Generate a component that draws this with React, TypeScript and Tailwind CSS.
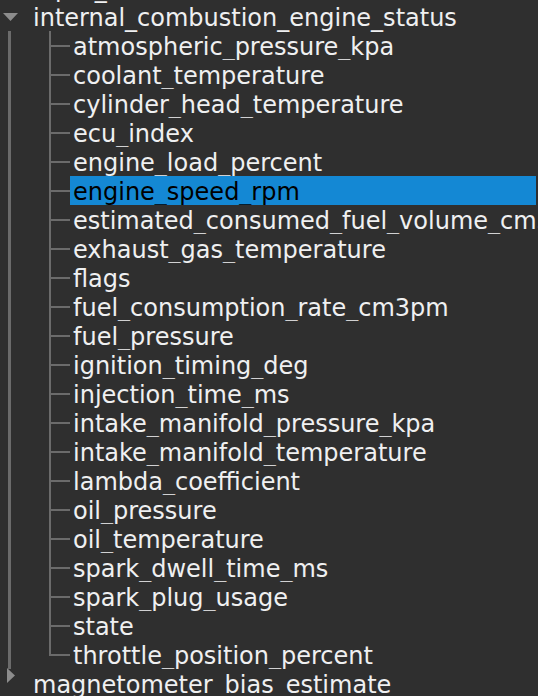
import React from "react";

const children = [
  "atmospheric_pressure_kpa",
  "coolant_temperature",
  "cylinder_head_temperature",
  "ecu_index",
  "engine_load_percent",
  "engine_speed_rpm",
  "estimated_consumed_fuel_volume_cm3",
  "exhaust_gas_temperature",
  "flags",
  "fuel_consumption_rate_cm3pm",
  "fuel_pressure",
  "ignition_timing_deg",
  "injection_time_ms",
  "intake_manifold_pressure_kpa",
  "intake_manifold_temperature",
  "lambda_coefficient",
  "oil_pressure",
  "oil_temperature",
  "spark_dwell_time_ms",
  "spark_plug_usage",
  "state",
  "throttle_position_percent",
];

const font = { fontFamily: '"DejaVu Sans", sans-serif' };

export default function App() {
  return (
    <div
      className="w-[538px] h-[696px] overflow-hidden bg-[#2f2f2f] text-[#eff0f1] text-[24px]"
      style={font}
    >
      <div className="-mt-[27px] flex flex-col">
        {/* previous sibling, cut off */}
        <div className="flex h-[29px]">
          <div className="w-[33px] shrink-0" />
          <div className="whitespace-nowrap leading-[33px]">input_status</div>
        </div>
        {/* expanded parent */}
        <div className="flex h-[29px]">
          <div className="w-[33px] shrink-0 flex items-center justify-start pl-[3px]">
            <svg width="15" height="8" viewBox="0 0 15 8">
              <polygon points="0,0 15,0 7.5,8" fill="#8c8c8c" />
            </svg>
          </div>
          <div className="whitespace-nowrap leading-[33px]">internal_combustion_engine_status</div>
        </div>
        {children.map((c, i) => {
          const last = i === children.length - 1;
          const selected = c === "engine_speed_rpm";
          return (
            <div key={c} className="flex h-[29px]">
              <div className="w-[40px] shrink-0 relative">
                <div className="absolute left-[8px] top-0 bottom-0 w-[3px] bg-[#6b6b6b]" />
              </div>
              <div className="w-[30px] shrink-0 relative">
                <div
                  className={`absolute left-[9px] top-0 w-[2px] bg-[#6b6b6b] ${
                    last ? "h-[16px]" : "bottom-0"
                  }`}
                />
                <div className="absolute left-[9px] right-0 top-[14px] h-[2px] bg-[#6b6b6b]" />
              </div>
              <div
                className={`flex-1 min-w-0 whitespace-nowrap overflow-hidden pl-[3px] leading-[33px] ${
                  selected ? "bg-[#1488d4] text-black mr-[2px]" : ""
                }`}
              >
                {c}
              </div>
            </div>
          );
        })}
        {/* collapsed sibling */}
        <div className="flex h-[29px]">
          <div className="w-[33px] shrink-0 relative">
            <svg
              className="absolute left-[7px] -top-[1px]"
              width="8"
              height="15"
              viewBox="0 0 8 15"
            >
              <polygon points="0,0 8,7.5 0,15" fill="#8c8c8c" />
            </svg>
          </div>
          <div className="whitespace-nowrap leading-[33px]">magnetometer_bias_estimate</div>
        </div>
      </div>
    </div>
  );
}
